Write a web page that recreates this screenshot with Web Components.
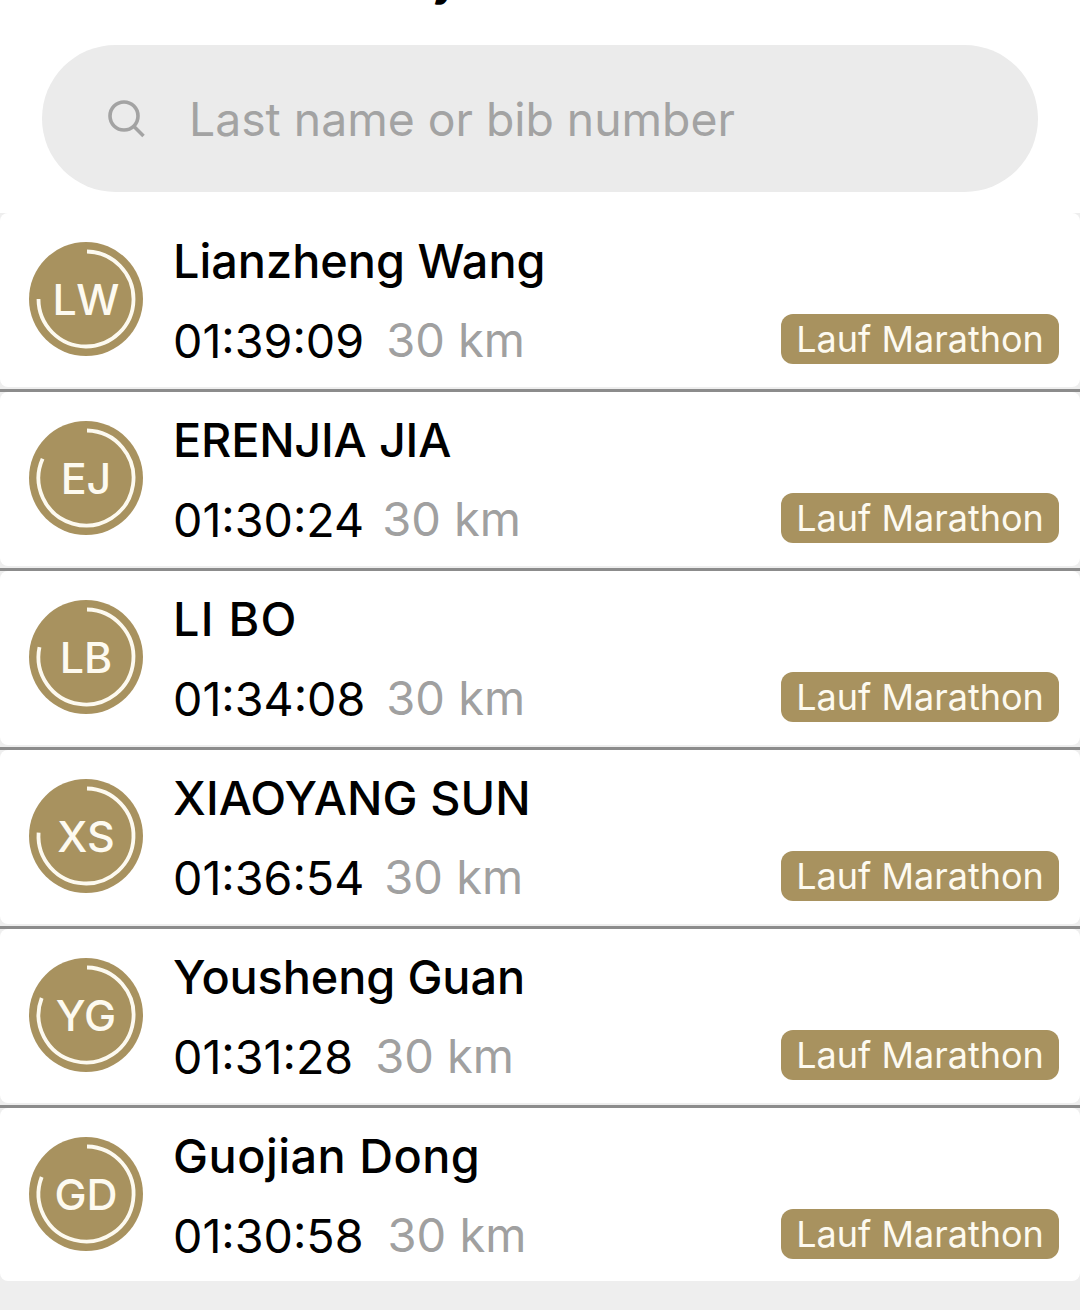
<!doctype html>
<html><head><meta charset="utf-8"><style>
html,body{margin:0;background:#eee;}
body{width:1080px;height:1310px;overflow:hidden;font-family:Inter,"Noto Sans",sans-serif;}
</style></head><body>
<results-page></results-page>
<script>
const GOLD='#a8925f';
class SearchBar extends HTMLElement{constructor(){super();this.attachShadow({mode:'open'}).innerHTML=`<style>
:host{display:flex;align-items:center;height:147px;margin:0 42px;padding-left:64px;box-sizing:border-box;background:#ebebeb;border-radius:74px;gap:43px;color:#a3a3a3;font-size:46.3px;}
svg{width:40px;height:40px;flex:none}
</style><svg viewBox="0 0 40 40" fill="none" stroke="#a3a3a3" stroke-width="3.6"><circle cx="18" cy="17" r="14"/><path d="M27.5 27l10 10"/></svg><span><slot></slot></span>`}}
customElements.define('search-bar',SearchBar);
class RingAvatar extends HTMLElement{constructor(){super();
const end=+this.getAttribute('end')*Math.PI/180,r=47.5,c=57;
const x=c+r*Math.sin(end),y=c-r*Math.cos(end);
this.attachShadow({mode:'open'}).innerHTML=`<style>
:host{display:flex;position:relative;width:114px;height:114px;margin-top:9px;border-radius:50%;background:${GOLD};color:#fdfaf0;align-items:center;justify-content:center;font-size:43px;font-weight:500;flex:none}
svg{position:absolute;inset:0}
</style><svg width="114" height="114" fill="none" stroke="#fdfaf0" stroke-width="3.8"><path d="M58 ${c-r}A${r} ${r} 0 1 1 ${x.toFixed(1)} ${y.toFixed(1)}"/></svg><slot></slot>`}}
customElements.define('ring-avatar',RingAvatar);
class TagPill extends HTMLElement{constructor(){super();this.attachShadow({mode:'open'}).innerHTML=`<style>
:host{display:flex;align-items:center;justify-content:center;width:278px;height:50px;background:${GOLD};color:#fdfaf0;border-radius:12px;font-size:36px;}
</style><slot></slot>`}}
customElements.define('tag-pill',TagPill);
class ResultRow extends HTMLElement{constructor(){super();
const g=a=>this.getAttribute(a);
this.attachShadow({mode:'open'}).innerHTML=`<style>
:host{display:block;background:#eee;padding-bottom:2px;border-bottom:3px solid #8c8c8c}
:host([last]){border-bottom:0;padding-bottom:0}
.card{display:flex;align-items:flex-start;height:174px;box-sizing:border-box;background:#fff;border-radius:8px;padding:20px 21px 0 29px;gap:30px}
:host([last]) .card{height:173px}
.main{flex:1;min-width:0;display:flex;flex-direction:column;gap:25px}
.name{font-size:46.8px;line-height:56px;color:#000;font-weight:500;letter-spacing:${g('ls')}px}
.line{display:flex;align-items:center;height:50px}
.time{font-size:46.6px;color:#000;margin:3px ${g('gap')}px 0 0}
.dist{font-size:47px;color:#a0a0a0;flex:1;margin-top:1px}
</style><div class="card"><ring-avatar end="${g('end')}">${g('init')}</ring-avatar><div class="main"><div class="name">${g('name')}</div><div class="line"><span class="time">${g('time')}</span><span class="dist">30 km</span><tag-pill>Lauf Marathon</tag-pill></div></div></div>`;
}}
customElements.define('result-row',ResultRow);
class ResultsPage extends HTMLElement{constructor(){super();
const rows=[['LW','Lianzheng Wang','01:39:09',270,0,22],['EJ','ERENJIA JIA','01:30:24',294,-.2,18],['LB','LI BO','01:34:08',282,1.3,21],['XS','XIAOYANG SUN','01:36:54',274,.1,20],['YG','Yousheng Guan','01:31:28',291,-.1,22],['GD','Guojian Dong','01:30:58',291,.5,24]];
this.attachShadow({mode:'open'}).innerHTML=`<style>
:host{display:block}
.top{background:#fff;height:213px;overflow:hidden}
.title{display:flow-root;height:45px;padding-left:432px;font-size:46px;font-weight:600;color:#000;line-height:56px}
.title span{display:block;margin-top:-50px}
</style><div class="top"><div class="title"><span>y</span></div><search-bar>Last name or bib number</search-bar></div>`+
rows.map((r,i)=>`<result-row init="${r[0]}" name="${r[1]}" time="${r[2]}" end="${r[3]}" ls="${r[4]}" gap="${r[5]}"${i==5?' last':''}></result-row>`).join('');
}}
customElements.define('results-page',ResultsPage);
</script></body></html>
